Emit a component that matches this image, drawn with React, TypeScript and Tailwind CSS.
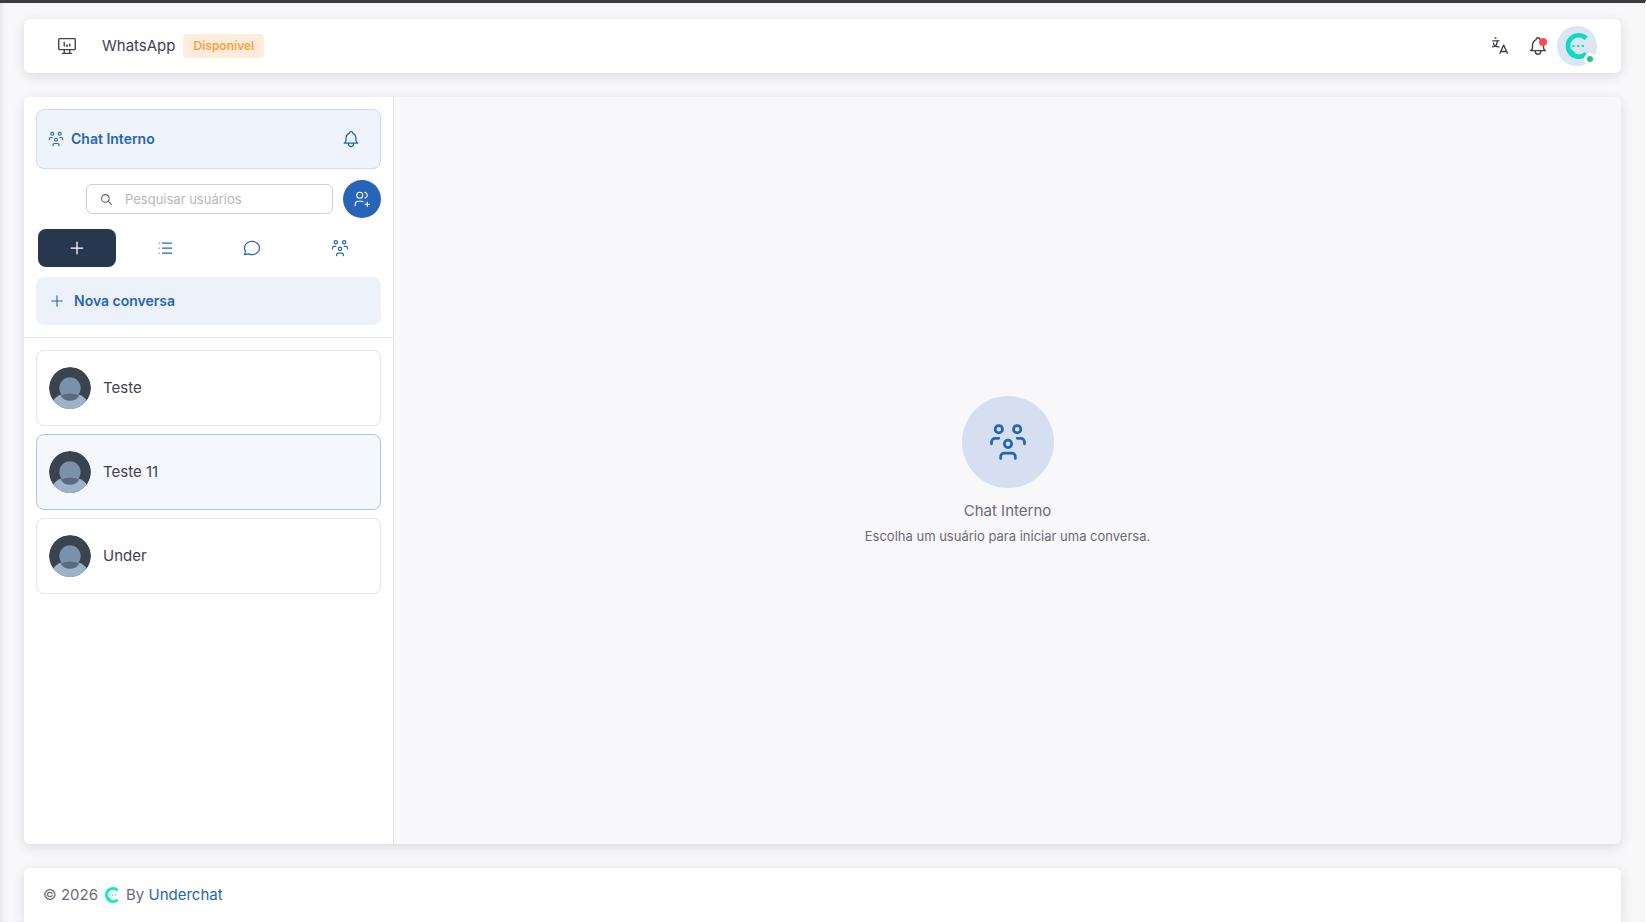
import React from "react";
import {
  TbBell,
  TbDeviceDesktopAnalytics,
  TbList,
  TbMessageCircle,
  TbPlus,
  TbSearch,
  TbUsersGroup,
  TbUsersPlus,
} from "react-icons/tb";

const CONTACTS = [
  { id: 1, name: "Teste" },
  { id: 2, name: "Teste 11" },
  { id: 3, name: "Under" },
];

const TABS = [
  { id: "new", label: "Nova conversa", Icon: TbPlus },
  { id: "list", label: "Lista", Icon: TbList },
  { id: "chats", label: "Conversas", Icon: TbMessageCircle },
  { id: "groups", label: "Grupos", Icon: TbUsersGroup },
];

function Logo({ className }: { className?: string }) {
  return (
    <svg viewBox="0 0 24 24" fill="none" className={className}>
      <path
        d="M20.5 5A9.9 9.9 0 1 0 20.5 19"
        stroke="currentColor"
        strokeWidth="4.2"
      />
      <path d="M6 14.5v5l5-1z" fill="currentColor" />
      <circle cx="8.9" cy="12" r="1.1" fill="currentColor" />
      <circle cx="13.1" cy="12" r="1.1" fill="currentColor" />
      <circle cx="17.3" cy="12" r="1.1" fill="currentColor" />
    </svg>
  );
}

function LanguageIcon() {
  return (
    <svg
      viewBox="0 0 24 24"
      fill="none"
      stroke="currentColor"
      strokeWidth="1.5"
      strokeLinecap="round"
      strokeLinejoin="round"
      className="h-[22px] w-[22px]"
    >
      <path d="M9 6.371c0 4.418 -2.239 6.629 -5 6.629" />
      <path d="M4 6.371h7" />
      <path d="M5 9c0 2.144 2.252 3.908 6 4" />
      <path d="M12 20l4 -9l4 9" />
      <path d="M19.1 18h-6.2" />
      <path d="M6.694 3l.793 .582" />
    </svg>
  );
}

function UserAvatar() {
  return (
    <svg viewBox="0 0 42 42" className="h-[42px] w-[42px] shrink-0 rounded-full">
      <circle cx="21" cy="21" r="21" fill="#39444f" />
      <circle cx="21" cy="21" r="10.7" fill="#7a91aa" />
      <ellipse cx="21" cy="40" rx="19" ry="14" fill="#9db2c8" />
      <path
        d="M11.6 28.2a24 24 0 0 1 18.8 0a10.7 10.7 0 0 1 -18.8 0z"
        fill="#586b80"
      />
    </svg>
  );
}

function Header() {
  return (
    <header className="flex h-[54px] shrink-0 items-center rounded-md bg-white px-6 shadow-[0_3px_12px_rgba(47,43,61,0.14)]">
      <button type="button" title="Painel" className="ml-2 text-[#444050]">
        <TbDeviceDesktopAnalytics size={22} strokeWidth={1.5} />
      </button>
      <span className="ml-6 text-[15px] leading-[22px] text-[#444050]">
        WhatsApp
      </span>
      <span className="ml-2 rounded bg-[#ffecdc] px-[10px] text-[12px] leading-6 font-semibold text-[#ff9f43]">
        Disponível
      </span>
      <div className="ml-auto flex items-center text-[#444050]">
        <button type="button" title="Idioma" className="p-2">
          <LanguageIcon />
        </button>
        <button type="button" title="Notificações" className="relative p-2">
          <TbBell size={22} strokeWidth={1.5} />
          <span className="absolute top-[11px] right-[10px] h-2 w-2 rounded-full bg-[#ff4c51]" />
        </button>
        <button
          type="button"
          title="Perfil"
          className="relative flex h-10 w-10 items-center justify-center rounded-full bg-[#dce5f2]"
        >
          <Logo className="h-[26px] w-[26px] text-[#0bdcc0]" />
          <span className="absolute right-[1px] bottom-[1px] h-3 w-3 rounded-full border-[3px] border-white bg-[#28c76f]" />
        </button>
      </div>
    </header>
  );
}

export default function App() {
  const [search, setSearch] = React.useState("");
  const [tab, setTab] = React.useState("new");
  const [selected, setSelected] = React.useState(2);

  const contacts = CONTACTS.filter((c) =>
    c.name.toLowerCase().includes(search.toLowerCase())
  );

  return (
    <div className="flex h-screen min-h-[600px] flex-col overflow-hidden border-t-[3px] border-r border-t-[#3d3b3d] border-r-white bg-[#f8f7fa] px-6 pt-4 font-['Inter',sans-serif] shadow-[inset_6px_0_6px_-4px_rgba(47,43,61,0.1)]">
      <Header />

      <main className="mt-6 flex min-h-0 flex-1 overflow-hidden rounded-md bg-[#f8f7fa] shadow-[0_3px_12px_rgba(47,43,61,0.14)]">
        <aside className="flex w-[370px] shrink-0 flex-col border-r border-[#e4e4e8] bg-white">
          <div className="border-b border-[#e4e4e6] p-3">
            <div className="flex h-[60px] items-center rounded-lg border border-[#cddcf0] bg-[#eff3fb] pr-[19px] pl-[10px] text-[#2765b8]">
              <TbUsersGroup size={18} strokeWidth={1.5} />
              <h1 className="ml-[6px] text-[14px] leading-[22px] font-semibold">
                Chat Interno
              </h1>
              <button type="button" title="Notificações" className="ml-auto">
                <TbBell size={20} strokeWidth={1.5} />
              </button>
            </div>

            <div className="mt-[11px] flex items-center justify-end gap-[10px]">
              <label className="flex h-[30px] w-[247px] items-center rounded-md border border-[#d1d0d4] pl-[13px] text-[#5f5b6a]">
                <TbSearch size={13} strokeWidth={2} className="shrink-0" />
                <input
                  type="text"
                  aria-label="Pesquisar usuários"
                  placeholder="Pesquisar usuários"
                  value={search}
                  onChange={(evt) => setSearch(evt.target.value)}
                  className="ml-3 min-w-0 flex-1 bg-transparent text-[13px] leading-5 outline-none placeholder:text-[#b9b7be]"
                />
              </label>
              <button
                type="button"
                title="Adicionar usuário"
                className="flex h-[38px] w-[38px] items-center justify-center rounded-full bg-[#2765b8] text-white"
              >
                <TbUsersPlus size={18} strokeWidth={1.5} />
              </button>
            </div>

            <div className="mt-[11px] grid grid-cols-4 gap-[10px] px-[2px]">
              {TABS.map(({ id, label, Icon }) => (
                <button
                  key={id}
                  type="button"
                  title={label}
                  onClick={() => setTab(id)}
                  className={`${
                    tab === id ? "bg-[#283750] text-white" : "text-[#2765b8]"
                  } flex h-[38px] items-center justify-center rounded-lg`}
                >
                  <Icon size={20} strokeWidth={1.5} />
                </button>
              ))}
            </div>

            <button
              type="button"
              className="mt-[10px] flex h-12 w-full items-center gap-2 rounded-lg bg-[#edf2fa] px-3 text-[14px] leading-[22px] font-semibold text-[#2765b8]"
            >
              <TbPlus size={18} strokeWidth={1.5} />
              Nova conversa
            </button>
          </div>

          <ul className="flex flex-col gap-2 overflow-auto p-3">
            {contacts.map((contact) => (
              <li key={contact.id}>
                <button
                  type="button"
                  onClick={() => setSelected(contact.id)}
                  className={`${
                    selected === contact.id
                      ? "border-[#adc5e6] bg-[#f4f7fc]"
                      : "border-[#e4e4e6] bg-white"
                  } flex h-[76px] w-full items-center gap-3 rounded-lg border px-3 text-[15px] leading-[22px] text-[#444050]`}
                >
                  <UserAvatar />
                  {contact.name}
                </button>
              </li>
            ))}
          </ul>
        </aside>

        <section className="flex flex-1 flex-col items-center justify-center text-[#6d6b77]">
          <div className="flex h-[92px] w-[92px] items-center justify-center rounded-full bg-[#d6dff0] text-[#2765b8]">
            <TbUsersGroup size={44} strokeWidth={1.5} />
          </div>
          <h2 className="mt-3 text-[15px] leading-[22px]">Chat Interno</h2>
          <p className="mt-1 text-[13px] leading-5">
            Escolha um usuário para iniciar uma conversa.
          </p>
        </section>
      </main>

      <footer className="mt-6 flex h-[54px] shrink-0 items-center rounded-t-md bg-white px-[19px] text-[15px] leading-[22px] text-[#6d6b77] shadow-[0_3px_12px_rgba(47,43,61,0.14)]">
        © 2026
        <Logo className="mx-[6px] h-4 w-4 text-[#0becc0]" />
        By&nbsp;
        <a href="#" className="text-[#2765b8]">
          Underchat
        </a>
      </footer>
    </div>
  );
}
